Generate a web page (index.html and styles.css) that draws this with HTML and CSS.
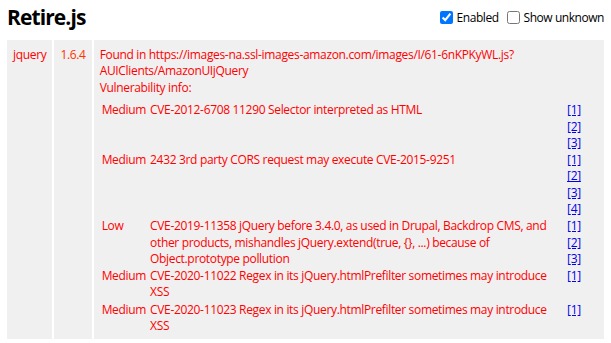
FILE: index.html
```html
<!DOCTYPE html>
<html lang="en">
<head>
  <meta charset="UTF-8" />
  <title>Retire.js</title>
  <link rel="stylesheet" href="styles.css">
</head>
<body>
  <!-- En-tete -->
  <div class="header">
    <h1>Retire.js</h1>
    <div class="options">
      <label><input type="checkbox" checked>Enabled</label>
      <label><input type="checkbox">Show unknown</label>
    </div>
  </div>

  <!-- Resultats -->
  <table class="results">
    <tr>
      <td class="lib">jquery</td>
      <td class="version">1.6.4</td>
      <td class="details">
        <div>Found in https://images-na.ssl-images-amazon.com/images/I/61-6nKPKyWL.js?<br>AUIClients/AmazonUIjQuery</div>
        <div>Vulnerability info:</div>
        <table class="vulns">
          <tr>
            <td class="sev">Medium</td>
            <td class="info">CVE-2012-6708 11290 Selector interpreted as HTML</td>
            <td class="refs"><a href="#">[1]</a> <a href="#">[2]</a> <a href="#">[3]</a></td>
          </tr>
          <tr>
            <td class="sev">Medium</td>
            <td class="info">2432 3rd party CORS request may execute CVE-2015-9251</td>
            <td class="refs"><a href="#">[1]</a> <a href="#">[2]</a> <a href="#">[3]</a> <a href="#">[4]</a></td>
          </tr>
          <tr>
            <td class="sev">Low</td>
            <td class="info">CVE-2019-11358 jQuery before 3.4.0, as used in Drupal, Backdrop CMS, and other products, mishandles jQuery.extend(true, {}, ...) because of Object.prototype pollution</td>
            <td class="refs"><a href="#">[1]</a> <a href="#">[2]</a> <a href="#">[3]</a></td>
          </tr>
          <tr>
            <td class="sev">Medium</td>
            <td class="info">CVE-2020-11022 Regex in its jQuery.htmlPrefilter sometimes may introduce XSS</td>
            <td class="refs"><a href="#">[1]</a></td>
          </tr>
          <tr>
            <td class="sev">Medium</td>
            <td class="info">CVE-2020-11023 Regex in its jQuery.htmlPrefilter sometimes may introduce XSS</td>
            <td class="refs"><a href="#">[1]</a></td>
          </tr>
        </table>
      </td>
    </tr>
  </table>
</body>
</html>
```

FILE: styles.css
```css
* {
  box-sizing: border-box;
}

body {
  margin: 0;
  padding: 0 5px;
  font-family: 'Open Sans', sans-serif;
  font-size: 12px;
  letter-spacing: -0.33px;
  color: #000;
  background-color: #fff;
}

.header {
  display: flex;
  justify-content: space-between;
  align-items: center;
  height: 34px;
  padding: 0 2px;
}

.header h1 {
  margin: 0;
  font-size: 21px;
  font-weight: bold;
  letter-spacing: -0.9px;
  color: #000;
}

.options {
  display: flex;
  align-items: center;
  gap: 8px;
}

.options label {
  display: flex;
  align-items: center;
  gap: 4px;
  font-size: 12px;
  letter-spacing: -0.45px;
}

.options input {
  margin: 0;
  width: 13px;
  height: 13px;
}

.results {
  width: 100%;
  border-spacing: 2px;
  margin-top: 4px;
}

.results > tbody > tr > td {
  background-color: #f0f0f0;
  vertical-align: top;
  padding: 7px 6px 4px;
  line-height: 16.4px;
}

.lib {
  color: #f00;
  width: 45px;
}

.version {
  color: #f30;
  width: 37px;
}

.details {
  color: #f00;
}

.vulns {
  border-spacing: 0 1px;
  margin-top: 5px;
}

.vulns td {
  vertical-align: top;
  padding: 0 2px;
  line-height: 16.3px;
}

.sev {
  width: 47px;
}

.info {
  width: 413px;
}

.refs {
  width: 30px;
  padding-left: 6px !important;
}

.refs a {
  display: block;
  color: #00e;
}
```
